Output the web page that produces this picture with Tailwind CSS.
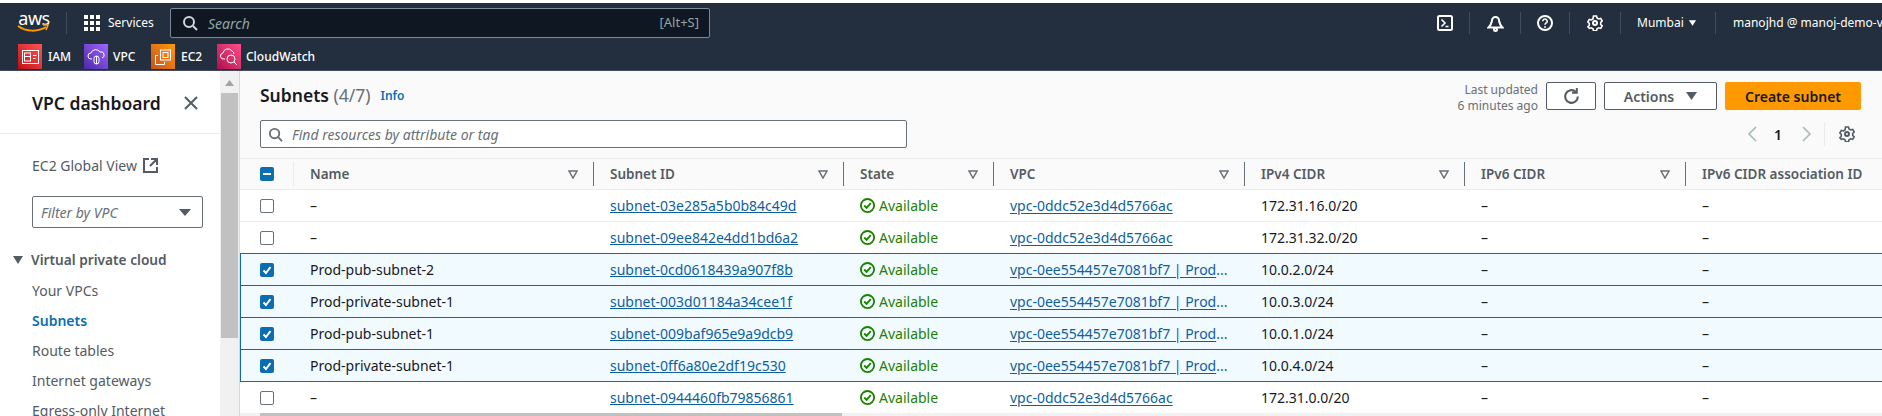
<!DOCTYPE html>
<html><head><meta charset="utf-8"><script src="https://cdn.jsdelivr.net/npm/@tailwindcss/browser@4"></script></head>
<body class="h-[416px] w-[1882px] overflow-hidden bg-white font-['Noto_Sans',sans-serif] text-[14px] text-[#16191f]">
<div class="h-[3px] bg-white"></div>
<header class="h-[68px] border-b border-[#414d5c] bg-[#232f3e] text-white">
  <div class="flex h-[40px] items-center">
    <div class="relative ml-[18px] flex h-[30px] w-[32px] shrink-0 flex-col items-center">
      <span class="text-[18px] leading-[20px] tracking-[-0.5px]">aws</span>
      <svg class="absolute left-[-1px] top-[16px]" width="33" height="10" viewBox="0 0 33 10"><path d="M1 2c8 6 20 6 28 1" fill="none" stroke="#f90" stroke-width="2"/><path d="M26 1h5l-2 5" fill="none" stroke="#f90" stroke-width="1.6"/></svg>
    </div>
    <div class="ml-[16px] h-[22px] w-px shrink-0 bg-[#414d5c]"></div>
    <svg class="ml-[17px] shrink-0" width="16" height="16" viewBox="0 0 16 16" fill="#fff"><rect x="0" y="0" width="4" height="4"/><rect x="6" y="0" width="4" height="4"/><rect x="12" y="0" width="4" height="4"/><rect x="0" y="6" width="4" height="4"/><rect x="6" y="6" width="4" height="4"/><rect x="12" y="6" width="4" height="4"/><rect x="0" y="12" width="4" height="4"/><rect x="6" y="12" width="4" height="4"/><rect x="12" y="12" width="4" height="4"/></svg>
    <span class="ml-[8px] w-[62px] shrink-0 text-[12px]">Services</span>
    <div class="flex h-[30px] w-[540px] shrink-0 items-center rounded-[2px] border border-[#7d8998] bg-[#0f1722] pl-[11px] pr-[10px]">
      <svg width="16" height="16" viewBox="0 0 16 16" fill="none" stroke="#d1d5db" stroke-width="2"><circle cx="7" cy="7" r="5"/><path d="M11 11l4 4"/></svg>
      <span class="ml-[10px] text-[14px] italic text-[#95a5a6]">Search</span>
      <span class="ml-auto text-[13px] text-[#95a5a6]">[Alt+S]</span>
    </div>
    <div class="ml-[727px] flex shrink-0 items-center">
      <svg width="16" height="16" viewBox="0 0 16 16" fill="none" stroke="#fff" stroke-width="2"><rect x="1" y="1" width="14" height="14" rx="1.5"/><path d="M4.500 4.500L8 8l-3.500 3.500M8.500 11.500h3" stroke-width="1.600"/></svg>
      <div class="ml-[16px] h-[22px] w-px bg-[#414d5c]"></div>
      <svg class="ml-[17px]" width="17" height="17" viewBox="0 0 17 17" fill="none" stroke="#fff" stroke-width="2"><path d="M1.500 12.500c2.500-2 3-4.500 3.500-7a3.500 3.500 0 017 0c.5 2.500 1 5 3.500 7z"/><circle cx="8.500" cy="14.500" r="1.500"/></svg>
      <div class="ml-[16px] h-[22px] w-px bg-[#414d5c]"></div>
      <svg class="ml-[16px]" width="16" height="16" viewBox="0 0 16 16" fill="none" stroke="#fff" stroke-width="2"><circle cx="8" cy="8" r="7"/><path d="M5.800 6.200a2.200 2.200 0 114 1.300c-.8.700-1.800 1-1.800 2.300" stroke-width="1.600"/><circle cx="8" cy="12" r=".6" stroke-width="1"/></svg>
      <div class="ml-[16px] h-[22px] w-px bg-[#414d5c]"></div>
      <svg class="ml-[17px]" width="16" height="16" viewBox="0 0 16 16" fill="none" stroke="#fff" stroke-width="2"><circle cx="8" cy="8" r="2"/><path d="M6.500 1h3l.5 2 1.700 1 2-.6 1.500 2.600-1.500 1.400v2l1.500 1.400-1.500 2.600-2-.6-1.700 1-.5 2h-3l-.5-2-1.700-1-2 .6L.8 11.800 2.300 10.400v-2L.8 7l1.500-2.600 2 .6 1.700-1z" stroke-width="1.600"/></svg>
      <div class="ml-[17px] h-[22px] w-px bg-[#414d5c]"></div>
      <span class="ml-[16px] w-[46px] text-[12px]">Mumbai</span>
      <svg class="ml-[5px]" width="9" height="8" viewBox="0 0 10 8" fill="#fff"><path d="M1 1h8L5 7z"/></svg>
      <div class="ml-[18px] h-[22px] w-px bg-[#414d5c]"></div>
      <span class="ml-[17px] whitespace-nowrap text-[12px]">manojhd @ manoj-demo-v4</span>
    </div>
  </div>
  <div class="flex h-[27px] items-start pl-[18px] pt-[1px] text-[12px] font-medium">
    <div class="flex w-[66px] items-center"><span class="flex h-[25px] w-[24px] items-center justify-center bg-gradient-to-tr from-[#bd0816] to-[#ff5252]"><svg width="17" height="14" viewBox="0 0 17 14" fill="none" stroke="#fff"><rect x=".5" y=".5" width="16" height="13"/><rect x="2.500" y="3" width="6" height="8"/><path d="M2.500 6.500h6M11 5.500h3.500M11 8.500h2.500"/></svg></span><span class="ml-[6px]">IAM</span></div>
    <div class="flex w-[67px] items-center"><span class="flex h-[25px] w-[24px] items-center justify-center bg-gradient-to-tr from-[#4d27a8] to-[#a166ff]"><svg width="18" height="18" viewBox="0 0 18 18" fill="none" stroke="#fff"><path d="M5 11H4a3 3 0 010-6 5 5 0 019-1 3 3 0 012 6"/><rect x="7" y="8" width="5" height="8" rx="2.500"/><path d="M9.500 8v8"/></svg></span><span class="ml-[5px]">VPC</span></div>
    <div class="flex w-[66px] items-center"><span class="flex h-[25px] w-[24px] items-center justify-center bg-gradient-to-tr from-[#c8511b] to-[#ff9900]"><svg width="18" height="19" viewBox="0 0 18 19" fill="none" stroke="#fff"><rect x="6.500" y="3" width="10" height="10"/><rect x="9" y="5.500" width="5" height="5"/><path d="M4 8.500H1.500v9h9V15"/></svg></span><span class="ml-[6px]">EC2</span></div>
    <div class="flex items-center"><span class="flex h-[25px] w-[24px] items-center justify-center bg-gradient-to-tr from-[#b0084d] to-[#ff4f8b]"><svg width="18" height="18" viewBox="0 0 18 18" fill="none" stroke="#fff"><path d="M5 11H4a3 3 0 01-1-6 5 5 0 019-2 4 4 0 012 3"/><circle cx="11" cy="11" r="4"/><path d="M14 14l3 3"/></svg></span><span class="ml-[5px]">CloudWatch</span></div>
  </div>
</header>
<div class="flex h-[345px]">
  <aside class="relative w-[220px] shrink-0 bg-white">
    <div class="flex h-[63px] items-center justify-between border-b border-[#eaeded] pl-[32px] pr-[21px] pt-[2px]">
      <span class="text-[17.5px] font-semibold">VPC dashboard</span>
      <svg width="16" height="16" viewBox="0 0 16 16" fill="none" stroke="#545b64" stroke-width="2"><path d="M2 2l12 12M14 2L2 14"/></svg>
    </div>
    <div class="mt-[21px] flex items-center pl-[32px] text-[#545b64]">EC2 Global View<svg class="ml-[6px]" width="15" height="15" viewBox="0 0 15 15" fill="none" stroke="#545b64" stroke-width="2"><path d="M6 1H1v13h13V9M8 1h6v6M14 1L7 8"/></svg></div>
    <div class="ml-[32px] mt-[20px] flex h-[32px] w-[171px] items-center justify-between rounded-[2px] border border-[#687078] pl-[8px] pr-[11px] italic text-[#687078]">Filter by VPC<svg width="12" height="9" viewBox="0 0 12 9" fill="#545b64"><path d="M0 1h12L6 8z"/></svg></div>
    <div class="mt-[22px] flex items-center pl-[13px] text-[13.7px] font-semibold text-[#545b64]"><svg width="10" height="8" viewBox="0 0 10 8" fill="#545b64"><path d="M0 0h10L5 8z"/></svg><span class="ml-[8px]">Virtual private cloud</span></div>
    <nav class="mt-[10px] flex flex-col gap-[10px] pl-[32px] leading-[20px] text-[#545b64]">
      <span>Your VPCs</span>
      <span class="font-semibold text-[#0a6eb0]">Subnets</span>
      <span>Route tables</span>
      <span>Internet gateways</span>
      <span>Egress-only Internet</span>
    </nav>
  </aside>
  <div class="flex w-[20px] shrink-0 flex-col items-center border-r border-[#d5dbdb] bg-[#f1f1f1]">
    <svg class="mt-[9px]" width="9" height="6" viewBox="0 0 9 6" fill="#a3a3a3"><path d="M4.500 0L9 6H0z"/></svg>
    <div class="mt-[7px] h-[245px] w-[17px] bg-[#c1c1c1]"></div>
  </div>
  <main class="relative min-w-0 flex-1 overflow-hidden bg-[#fafafa]">
    <div class="flex h-[44px] items-start pl-[20px] pr-[21px]">
      <h1 class="mt-[12px] text-[17.5px] leading-[24px] font-semibold">Subnets <span class="font-normal text-[#687078]">(4/7)</span></h1>
      <span class="ml-[10px] mt-[16px] text-[12px] font-semibold text-[#0a6eb0]">Info</span>
      <div class="ml-auto mr-[8px] mt-[11px] text-right text-[12px] leading-[16px] text-[#687078]">Last updated<br>6 minutes ago</div>
      <button class="mt-[11px] flex h-[28px] w-[50px] items-center justify-center rounded-[2px] border border-[#545b64] bg-white"><svg width="17" height="17" viewBox="0 0 16 16" fill="none" stroke="#545b64" stroke-width="2"><path d="M14 8a6 6 0 11-2-4.500"/><path d="M13 0v4.500H8.500" stroke-width="1.800"/></svg></button>
      <button class="ml-[8px] mt-[11px] flex h-[28px] w-[113px] items-center justify-center gap-[12px] rounded-[2px] border border-[#545b64] bg-white font-semibold text-[#545b64]">Actions<svg width="11" height="8" viewBox="0 0 11 8" fill="#545b64"><path d="M0 0h11L5.500 8z"/></svg></button>
      <button class="ml-[8px] mt-[11px] flex h-[28px] w-[136px] items-center justify-center rounded-[2px] bg-[#ff9900] font-semibold">Create subnet</button>
    </div>
    <div class="flex h-[43px] items-start pl-[20px] pr-[27px]">
      <div class="mt-[5px] flex h-[28px] w-[647px] items-center rounded-[2px] border border-[#687078] bg-white pl-[7px] italic text-[#687078]"><svg class="mr-[9px]" width="15" height="15" viewBox="0 0 16 16" fill="none" stroke="#687078" stroke-width="2"><circle cx="7" cy="7" r="5"/><path d="M11 11l4 4"/></svg>Find resources by attribute or tag</div>
      <div class="ml-auto mt-[7px] flex items-center">
        <svg width="11" height="16" viewBox="0 0 11 16" fill="none" stroke="#aab7b8" stroke-width="1.600"><path d="M10 1L3 8l7 7"/></svg>
        <span class="ml-[17px] font-semibold">1</span>
        <svg class="ml-[19px]" width="11" height="16" viewBox="0 0 11 16" fill="none" stroke="#aab7b8" stroke-width="1.600"><path d="M2 1l7 7-7 7"/></svg>
        <div class="ml-[12px] h-[24px] w-px bg-[#eaeded]"></div>
        <svg class="ml-[14px]" width="16" height="16" viewBox="0 0 16 16" fill="none" stroke="#545b64" stroke-width="2"><circle cx="8" cy="8" r="2"/><path d="M6.500 1h3l.5 2 1.700 1 2-.6 1.500 2.600-1.500 1.400v2l1.500 1.400-1.500 2.600-2-.6-1.700 1-.5 2h-3l-.5-2-1.700-1-2 .6L.8 11.800 2.300 10.400v-2L.8 7l1.500-2.600 2 .6 1.700-1z" stroke-width="1.600"/></svg>
      </div>
    </div>
    <div class="grid h-[32px] grid-cols-[54px_300px_250px_150px_251px_220px_221px_1fr] items-center border-y border-[#eaeded] text-[13.5px] font-semibold text-[#545b64]">
      <div class="flex h-[24px] items-center border-r border-[#eaeded] pl-[20px]"><span class="flex h-[14px] w-[14px] items-center justify-center rounded-[2px] bg-[#0a6eb0]"><span class="h-[2px] w-[8px] bg-white"></span></span></div>
      <div class="flex h-[24px] items-center justify-between border-r border-[#687078] pl-[16px] pr-[15px]">Name<svg width="10" height="9" viewBox="0 0 10 9" fill="none" stroke="#687078" stroke-width="1.500"><path d="M1 1h8L5 8z"/></svg></div>
      <div class="flex h-[24px] items-center justify-between border-r border-[#687078] pl-[16px] pr-[15px]">Subnet ID<svg width="10" height="9" viewBox="0 0 10 9" fill="none" stroke="#687078" stroke-width="1.500"><path d="M1 1h8L5 8z"/></svg></div>
      <div class="flex h-[24px] items-center justify-between border-r border-[#687078] pl-[16px] pr-[15px]">State<svg width="10" height="9" viewBox="0 0 10 9" fill="none" stroke="#687078" stroke-width="1.500"><path d="M1 1h8L5 8z"/></svg></div>
      <div class="flex h-[24px] items-center justify-between border-r border-[#687078] pl-[16px] pr-[15px]">VPC<svg width="10" height="9" viewBox="0 0 10 9" fill="none" stroke="#687078" stroke-width="1.500"><path d="M1 1h8L5 8z"/></svg></div>
      <div class="flex h-[24px] items-center justify-between border-r border-[#687078] pl-[16px] pr-[15px]">IPv4 CIDR<svg width="10" height="9" viewBox="0 0 10 9" fill="none" stroke="#687078" stroke-width="1.500"><path d="M1 1h8L5 8z"/></svg></div>
      <div class="flex h-[24px] items-center justify-between border-r border-[#687078] pl-[16px] pr-[15px]">IPv6 CIDR<svg width="10" height="9" viewBox="0 0 10 9" fill="none" stroke="#687078" stroke-width="1.500"><path d="M1 1h8L5 8z"/></svg></div>
      <div class="flex h-[24px] items-center pl-[16px] whitespace-nowrap">IPv6 CIDR association ID</div>
    </div>

    <div class="grid h-[32px] grid-cols-[54px_300px_250px_150px_251px_220px_221px_1fr] items-center border-b border-[#eaeded] bg-white">
      <div class="pl-[20px]"><span class="block h-[14px] w-[14px] rounded-[2px] border border-[#687078] bg-white"></span></div>
      <div class="pl-[16px]">–</div>
      <div class="pl-[16px]"><a class="text-[#0f5f9e] underline">subnet-03e285a5b0b84c49d</a></div>
      <div class="flex items-center pl-[16px] text-[#1d8102]"><svg class="mr-[4px]" width="15" height="15" viewBox="0 0 16 16" fill="none" stroke="#1d8102" stroke-width="2"><circle cx="8" cy="8" r="7"/><path d="M4.500 8l2.500 2.500 4.500-5"/></svg>Available</div>
      <div class="pl-[16px]"><a class="text-[#0f5f9e] underline underline-offset-2">vpc-0ddc52e3d4d5766ac</a></div>
      <div class="pl-[16px]">172.31.16.0/20</div>
      <div class="pl-[16px]">–</div>
      <div class="pl-[16px]">–</div>
    </div>
    <div class="grid h-[32px] grid-cols-[54px_300px_250px_150px_251px_220px_221px_1fr] items-center border-b border-[#0f6ca8] bg-white">
      <div class="pl-[20px]"><span class="block h-[14px] w-[14px] rounded-[2px] border border-[#687078] bg-white"></span></div>
      <div class="pl-[16px]">–</div>
      <div class="pl-[16px]"><a class="text-[#0f5f9e] underline">subnet-09ee842e4dd1bd6a2</a></div>
      <div class="flex items-center pl-[16px] text-[#1d8102]"><svg class="mr-[4px]" width="15" height="15" viewBox="0 0 16 16" fill="none" stroke="#1d8102" stroke-width="2"><circle cx="8" cy="8" r="7"/><path d="M4.500 8l2.500 2.500 4.500-5"/></svg>Available</div>
      <div class="pl-[16px]"><a class="text-[#0f5f9e] underline underline-offset-2">vpc-0ddc52e3d4d5766ac</a></div>
      <div class="pl-[16px]">172.31.32.0/20</div>
      <div class="pl-[16px]">–</div>
      <div class="pl-[16px]">–</div>
    </div>
    <div class="grid h-[32px] grid-cols-[53px_300px_250px_150px_251px_220px_221px_1fr] items-center border-b border-l border-[#0f6ca8] bg-[#f1faff]">
      <div class="pl-[19px]"><span class="flex h-[14px] w-[14px] items-center justify-center rounded-[2px] bg-[#0a6eb0]"><svg width="10" height="10" viewBox="0 0 10 10" fill="none" stroke="#fff" stroke-width="2"><path d="M1.500 5.500L4 8l4.500-6"/></svg></span></div>
      <div class="pl-[16px]">Prod-pub-subnet-2</div>
      <div class="pl-[16px]"><a class="text-[#0f5f9e] underline">subnet-0cd0618439a907f8b</a></div>
      <div class="flex items-center pl-[16px] text-[#1d8102]"><svg class="mr-[4px]" width="15" height="15" viewBox="0 0 16 16" fill="none" stroke="#1d8102" stroke-width="2"><circle cx="8" cy="8" r="7"/><path d="M4.500 8l2.500 2.500 4.500-5"/></svg>Available</div>
      <div class="pl-[16px]"><a class="text-[#0f5f9e] underline underline-offset-2">vpc-0ee554457e7081bf7 | Prod</a><span class="text-[#0f5f9e]">...</span></div>
      <div class="pl-[16px]">10.0.2.0/24</div>
      <div class="pl-[16px]">–</div>
      <div class="pl-[16px]">–</div>
    </div>
    <div class="grid h-[32px] grid-cols-[53px_300px_250px_150px_251px_220px_221px_1fr] items-center border-b border-l border-[#0f6ca8] bg-[#f1faff]">
      <div class="pl-[19px]"><span class="flex h-[14px] w-[14px] items-center justify-center rounded-[2px] bg-[#0a6eb0]"><svg width="10" height="10" viewBox="0 0 10 10" fill="none" stroke="#fff" stroke-width="2"><path d="M1.500 5.500L4 8l4.500-6"/></svg></span></div>
      <div class="pl-[16px]">Prod-private-subnet-1</div>
      <div class="pl-[16px]"><a class="text-[#0f5f9e] underline">subnet-003d01184a34cee1f</a></div>
      <div class="flex items-center pl-[16px] text-[#1d8102]"><svg class="mr-[4px]" width="15" height="15" viewBox="0 0 16 16" fill="none" stroke="#1d8102" stroke-width="2"><circle cx="8" cy="8" r="7"/><path d="M4.500 8l2.500 2.500 4.500-5"/></svg>Available</div>
      <div class="pl-[16px]"><a class="text-[#0f5f9e] underline underline-offset-2">vpc-0ee554457e7081bf7 | Prod</a><span class="text-[#0f5f9e]">...</span></div>
      <div class="pl-[16px]">10.0.3.0/24</div>
      <div class="pl-[16px]">–</div>
      <div class="pl-[16px]">–</div>
    </div>
    <div class="grid h-[32px] grid-cols-[53px_300px_250px_150px_251px_220px_221px_1fr] items-center border-b border-l border-[#0f6ca8] bg-[#f1faff]">
      <div class="pl-[19px]"><span class="flex h-[14px] w-[14px] items-center justify-center rounded-[2px] bg-[#0a6eb0]"><svg width="10" height="10" viewBox="0 0 10 10" fill="none" stroke="#fff" stroke-width="2"><path d="M1.500 5.500L4 8l4.500-6"/></svg></span></div>
      <div class="pl-[16px]">Prod-pub-subnet-1</div>
      <div class="pl-[16px]"><a class="text-[#0f5f9e] underline">subnet-009baf965e9a9dcb9</a></div>
      <div class="flex items-center pl-[16px] text-[#1d8102]"><svg class="mr-[4px]" width="15" height="15" viewBox="0 0 16 16" fill="none" stroke="#1d8102" stroke-width="2"><circle cx="8" cy="8" r="7"/><path d="M4.500 8l2.500 2.500 4.500-5"/></svg>Available</div>
      <div class="pl-[16px]"><a class="text-[#0f5f9e] underline underline-offset-2">vpc-0ee554457e7081bf7 | Prod</a><span class="text-[#0f5f9e]">...</span></div>
      <div class="pl-[16px]">10.0.1.0/24</div>
      <div class="pl-[16px]">–</div>
      <div class="pl-[16px]">–</div>
    </div>
    <div class="grid h-[32px] grid-cols-[53px_300px_250px_150px_251px_220px_221px_1fr] items-center border-b border-l border-[#0f6ca8] bg-[#f1faff]">
      <div class="pl-[19px]"><span class="flex h-[14px] w-[14px] items-center justify-center rounded-[2px] bg-[#0a6eb0]"><svg width="10" height="10" viewBox="0 0 10 10" fill="none" stroke="#fff" stroke-width="2"><path d="M1.500 5.500L4 8l4.500-6"/></svg></span></div>
      <div class="pl-[16px]">Prod-private-subnet-1</div>
      <div class="pl-[16px]"><a class="text-[#0f5f9e] underline">subnet-0ff6a80e2df19c530</a></div>
      <div class="flex items-center pl-[16px] text-[#1d8102]"><svg class="mr-[4px]" width="15" height="15" viewBox="0 0 16 16" fill="none" stroke="#1d8102" stroke-width="2"><circle cx="8" cy="8" r="7"/><path d="M4.500 8l2.500 2.500 4.500-5"/></svg>Available</div>
      <div class="pl-[16px]"><a class="text-[#0f5f9e] underline underline-offset-2">vpc-0ee554457e7081bf7 | Prod</a><span class="text-[#0f5f9e]">...</span></div>
      <div class="pl-[16px]">10.0.4.0/24</div>
      <div class="pl-[16px]">–</div>
      <div class="pl-[16px]">–</div>
    </div>
    <div class="grid h-[31px] grid-cols-[54px_300px_250px_150px_251px_220px_221px_1fr] items-center bg-white">
      <div class="pl-[20px]"><span class="block h-[14px] w-[14px] rounded-[2px] border border-[#687078] bg-white"></span></div>
      <div class="pl-[16px]">–</div>
      <div class="pl-[16px]"><a class="text-[#0f5f9e] underline">subnet-0944460fb79856861</a></div>
      <div class="flex items-center pl-[16px] text-[#1d8102]"><svg class="mr-[4px]" width="15" height="15" viewBox="0 0 16 16" fill="none" stroke="#1d8102" stroke-width="2"><circle cx="8" cy="8" r="7"/><path d="M4.500 8l2.500 2.500 4.500-5"/></svg>Available</div>
      <div class="pl-[16px]"><a class="text-[#0f5f9e] underline underline-offset-2">vpc-0ddc52e3d4d5766ac</a></div>
      <div class="pl-[16px]">172.31.0.0/20</div>
      <div class="pl-[16px]">–</div>
      <div class="pl-[16px]">–</div>
    </div>
    <div class="h-[3px] bg-[#f1f1f1] pl-[20px]"><div class="h-[3px] w-[582px] bg-[#c1c1c1]"></div></div>
  </main>
</div>
</body></html>
